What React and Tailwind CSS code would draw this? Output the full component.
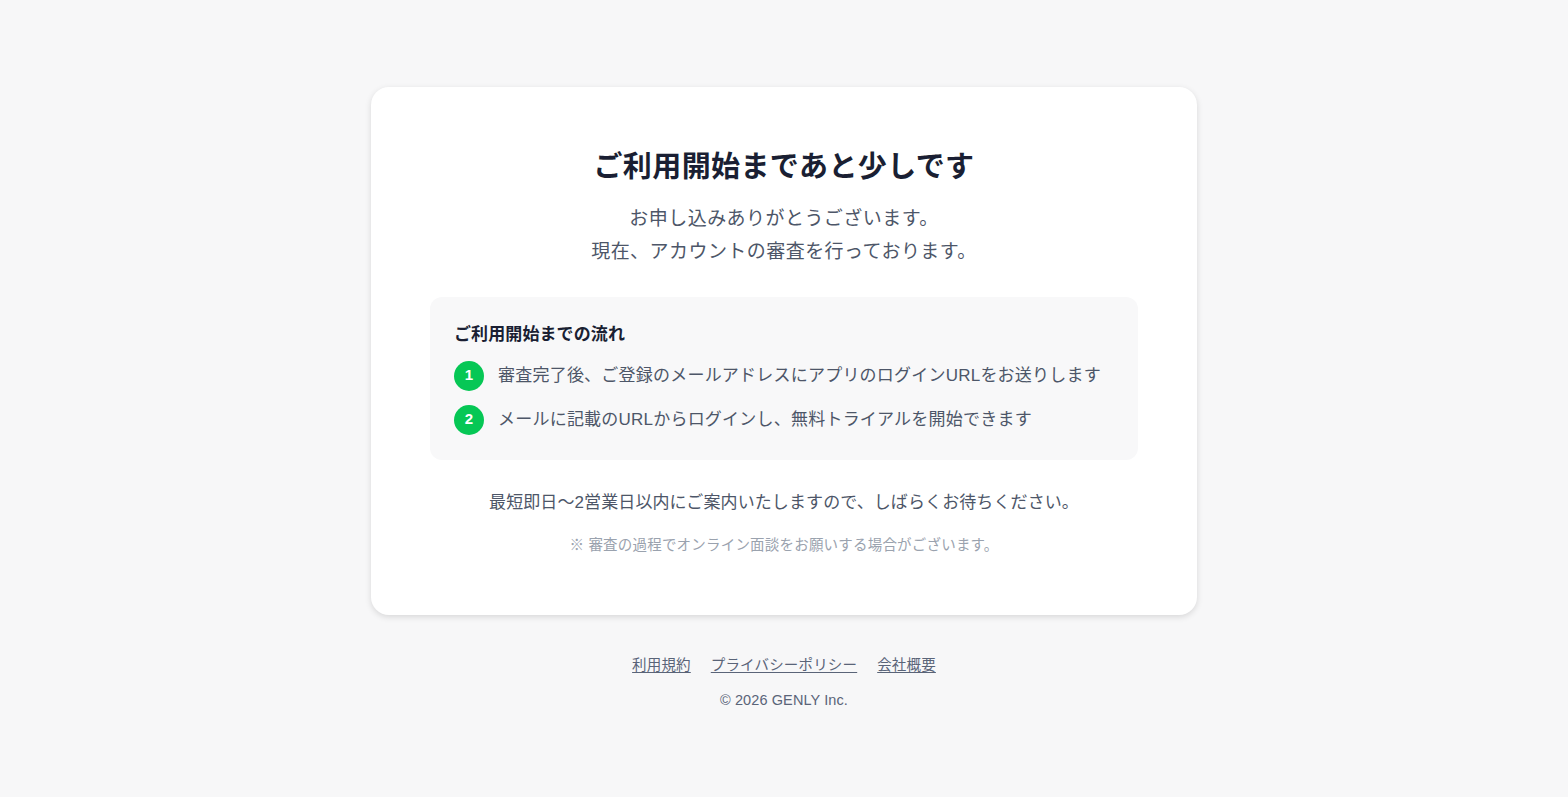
import React from 'react';

const steps = [
  '審査完了後、ご登録のメールアドレスにアプリのログインURLをお送りします',
  'メールに記載のURLからログインし、無料トライアルを開始できます',
];

const links = ['利用規約', 'プライバシーポリシー', '会社概要'];

export default function App() {
  return (
    <div
      className="min-h-screen w-full bg-[#f7f7f8] flex flex-col items-center justify-center"
      style={{ fontFamily: '"Liberation Sans", "Noto Sans CJK JP", sans-serif' }}
    >
      <div className="w-[826px] bg-white rounded-[18px] shadow-[0_2px_6px_rgba(0,0,0,0.13)] px-[59px] pt-[59px] pb-[59px] flex flex-col items-center">
        <h1 className="text-[29px] leading-[42px] font-bold tracking-[0.4px] text-[#1a1f33]">
          ご利用開始まであと少しです
        </h1>
        <p className="mt-[14px] text-[19px] leading-[33px] tracking-[0.45px] text-[#4d5668] text-center">
          お申し込みありがとうございます。
          <br />
          現在、アカウントの審査を行っております。
        </p>

        <div className="mt-[29px] w-full bg-[#f8f8f9] rounded-xl px-6 pt-[26px] pb-[25px]">
          <h2 className="text-[17px] leading-6 font-bold tracking-[0.1px] text-[#1a1f33]">
            ご利用開始までの流れ
          </h2>
          <ul className="mt-[14px] flex flex-col gap-[14px]">
            {steps.map((s, i) => (
              <li key={i} className="flex items-center h-[30px] gap-[14px]">
                <span className="w-[30px] h-[30px] rounded-full bg-[#06c755] text-white text-[15px] font-bold flex items-center justify-center shrink-0">
                  {i + 1}
                </span>
                <span className="text-[17px] leading-7 tracking-[0.22px] text-[#4d5668]">{s}</span>
              </li>
            ))}
          </ul>
        </div>

        <p className="mt-[29px] text-[17px] leading-7 tracking-[0.1px] text-[#4d5668]">
          最短即日〜2営業日以内にご案内いたしますので、しばらくお待ちください。
        </p>
        <p className="mt-[17px] text-[14.5px] leading-[22px] tracking-[0.2px] text-[#9aa2ae]">
          ※ 審査の過程でオンライン面談をお願いする場合がございます。
        </p>
      </div>

      <nav className="mt-[39px] flex gap-5 text-[14.5px] leading-[22px] tracking-[0.17px] text-[#5a6478]">
        {links.map((l) => (
          <a key={l} href="#" className="underline underline-offset-2">
            {l}
          </a>
        ))}
      </nav>
      <p className="mt-[13px] text-[14.5px] leading-[22px] tracking-[0.1px] text-[#5a6478]">© 2026 GENLY Inc.</p>
    </div>
  );
}
